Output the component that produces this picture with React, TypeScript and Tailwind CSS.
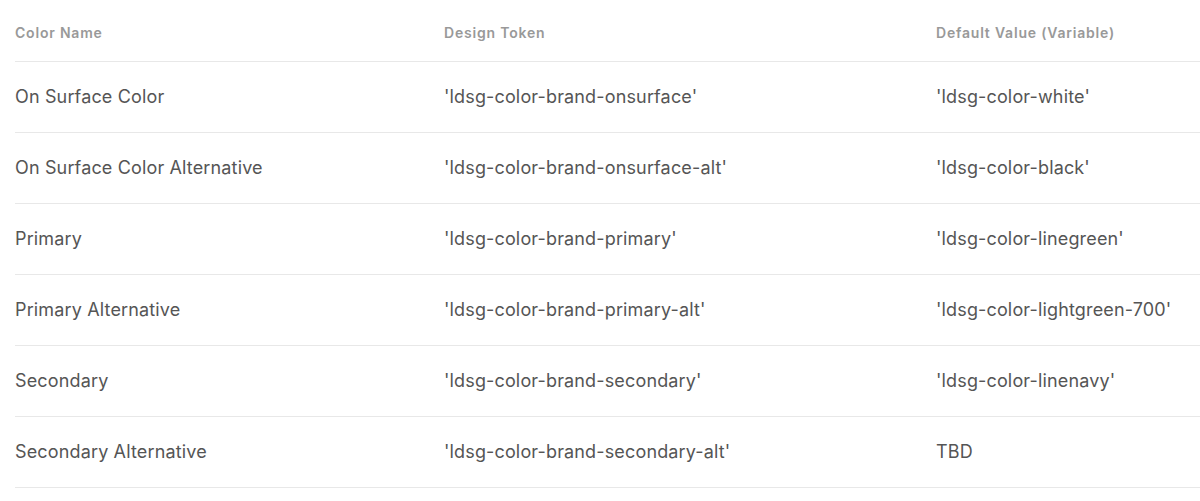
import React from "react";

const rows: [string, string, string][] = [
  ["On Surface Color", "'ldsg-color-brand-onsurface'", "'ldsg-color-white'"],
  ["On Surface Color Alternative", "'ldsg-color-brand-onsurface-alt'", "'ldsg-color-black'"],
  ["Primary", "'ldsg-color-brand-primary'", "'ldsg-color-linegreen'"],
  ["Primary Alternative", "'ldsg-color-brand-primary-alt'", "'ldsg-color-lightgreen-700'"],
  ["Secondary", "'ldsg-color-brand-secondary'", "'ldsg-color-linenavy'"],
  ["Secondary Alternative", "'ldsg-color-brand-secondary-alt'", "TBD"],
];

export default function App() {
  return (
    <div className="bg-white min-h-screen pl-[15px] font-['Inter','Liberation_Sans',sans-serif]">
      <table className="w-full border-collapse text-left">
        <thead>
          <tr className="border-b border-[#e8e8e8]">
            <th className="w-[429px] h-[61px] p-0 pt-[4px] text-[14px] font-semibold tracking-[0.8px] text-[#999999] align-middle">
              Color Name
            </th>
            <th className="w-[492px] h-[61px] p-0 pt-[4px] text-[14px] font-semibold tracking-[0.8px] text-[#999999] align-middle">
              Design Token
            </th>
            <th className="h-[61px] p-0 pt-[4px] text-[14px] font-semibold tracking-[0.8px] text-[#999999] align-middle">
              Default Value (Variable)
            </th>
          </tr>
        </thead>
        <tbody>
          {rows.map(([name, token, value]) => (
            <tr key={name} className="border-b border-[#e8e8e8]">
              <td className="h-[71px] p-0 tracking-[0.15px] text-[18px] text-[#555555] align-middle">{name}</td>
              <td className="h-[71px] p-0 tracking-[0.15px] text-[18px] text-[#555555] align-middle">{token}</td>
              <td className="h-[71px] p-0 tracking-[0.15px] text-[18px] text-[#555555] align-middle">{value}</td>
            </tr>
          ))}
        </tbody>
      </table>
    </div>
  );
}
